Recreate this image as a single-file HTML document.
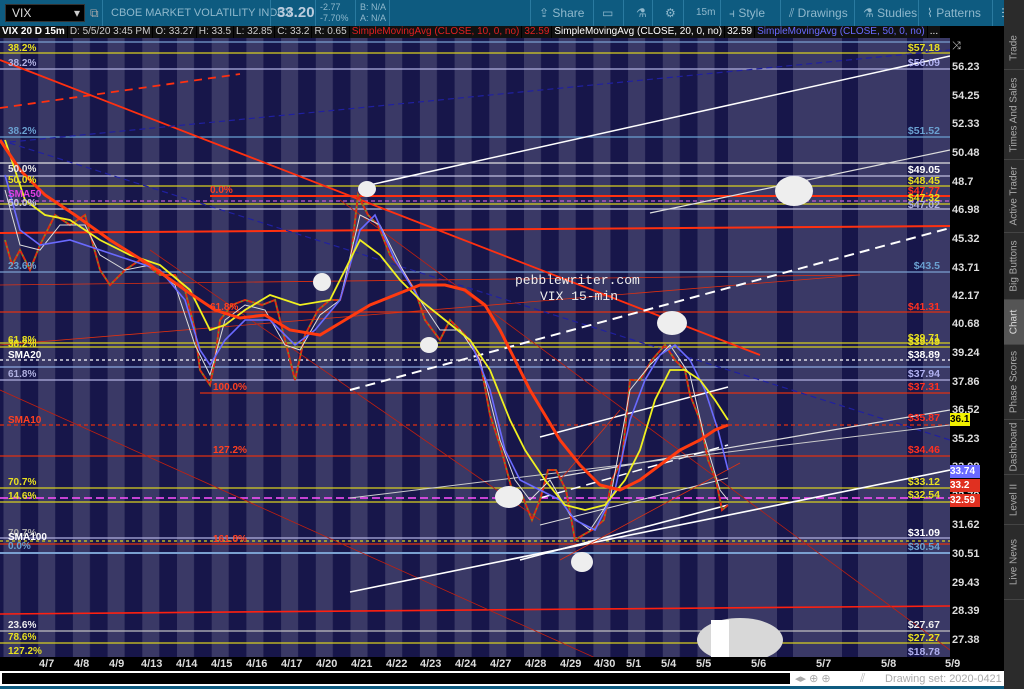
<!DOCTYPE html>
<html><head><meta charset="utf-8"><style>
*{margin:0;padding:0;box-sizing:border-box}
body{width:1024px;height:689px;overflow:hidden;background:#000;font-family:"Liberation Sans",sans-serif;position:relative}
.top{position:absolute;left:0;top:0;width:1024px;height:26px;background:#0e5b80;color:#8fb8cc;font-size:12px}
.top div{position:absolute;top:0;height:26px;line-height:26px;white-space:nowrap}
.sep{border-left:1px solid #2a7aa0}
.info{position:absolute;left:0;top:26px;width:950px;height:12px;background:#000;font-size:10px;line-height:12px;color:#fff;white-space:nowrap;overflow:hidden}
.info span{display:inline-block;background:#111;margin-right:1px;padding:0 2px}
.side{position:absolute;left:1004px;top:0;width:20px;height:689px;background:#2b2b2b}
.tab{position:absolute;left:0;width:20px;border-bottom:1px solid #444;color:#aaa;font-size:10px}
.tab span{position:absolute;left:50%;top:50%;transform:translate(-50%,-50%) rotate(-90deg);white-space:nowrap}
.ax{position:absolute;left:952px;font-size:11px;color:#ddd;font-weight:bold}
.dt{position:absolute;top:658px;font-size:11px;color:#ddd;font-weight:bold}
</style></head><body>
<div class="top">
 <div style="left:5px;top:4px;height:18px;line-height:16px;width:80px;background:#000;color:#ddd;padding-left:6px;border:1px solid #333">VIX<span style="position:absolute;right:4px;top:0;color:#ccc">▾</span></div>
 <div style="left:90px;color:#aaa">⧉</div>
 <div style="left:102px;width:168px;padding-left:8px;font-size:11px" class="sep">CBOE MARKET VOLATILITY INDEX</div>
 <div style="left:270px;width:45px;padding-left:6px;font-size:15px;font-weight:bold;color:#bcd" class="sep">33.20</div>
 <div style="left:315px;width:40px;padding-left:4px;font-size:9px;line-height:11px;padding-top:2px" class="sep">-2.77<br>-7.70%</div>
 <div style="left:355px;width:34px;padding-left:4px;font-size:9px;line-height:11px;padding-top:2px" class="sep">B: N/A<br>A: N/A</div>
 <div style="left:389px;width:1px;background:#2a7aa0"></div>
 <div style="left:530px;padding-left:8px" class="sep">⇪ Share</div>
 <div style="left:593px;padding-left:8px" class="sep">▭</div>
 <div style="left:623px;padding-left:12px" class="sep">⚗</div>
 <div style="left:652px;padding-left:12px" class="sep">⚙</div>
 <div style="left:683px;padding-left:12px;font-size:10px" class="sep">15m</div>
 <div style="left:720px;padding-left:8px" class="sep">⫞ Style</div>
 <div style="left:780px;padding-left:8px" class="sep">⫽ Drawings</div>
 <div style="left:854px;padding-left:8px" class="sep">⚗ Studies</div>
 <div style="left:918px;padding-left:8px" class="sep">⌇ Patterns</div>
 <div style="left:992px;padding-left:8px" class="sep">☰</div>
</div>
<div class="info"><span style="font-weight:bold">VIX 20 D 15m</span><span style="color:#ccc">D: 5/5/20 3:45 PM</span><span style="color:#ccc">O: 33.27</span><span style="color:#ccc">H: 33.5</span><span style="color:#ccc">L: 32.85</span><span style="color:#ccc">C: 33.2</span><span style="color:#ccc">R: 0.65</span><span style="color:#e02020">SimpleMovingAvg (CLOSE, 10, 0, no)</span><span style="color:#e02020">32.59</span><span>SimpleMovingAvg (CLOSE, 20, 0, no)</span><span>32.59</span><span style="color:#6a6aff">SimpleMovingAvg (CLOSE, 50, 0, no)</span><span>...</span></div>
<svg style="position:absolute;left:0;top:38px" width="950" height="619" viewBox="0 38 950 619">
<defs><pattern id="st" x="3.5" y="0" width="34.7" height="700" patternUnits="userSpaceOnUse"><rect width="34.7" height="700" fill="#17164a"/><rect width="17" height="700" fill="#3a3966"/></pattern></defs>
<rect x="0" y="38" width="950" height="619" fill="#3a3966"/>
<rect x="0" y="38" width="728" height="619" fill="url(#st)"/>
<rect x="777" y="38" width="16" height="619" fill="#17164a"/>
<rect x="842" y="38" width="16" height="619" fill="#17164a"/>
<rect x="907" y="38" width="16" height="619" fill="#17164a"/>
<g stroke-width="1.2" fill="none">
<line x1="0" y1="42" x2="950" y2="42" stroke="#7aa0d0"/>
<line x1="0" y1="53" x2="950" y2="53" stroke="#d8d020"/>
<line x1="0" y1="69" x2="950" y2="69" stroke="#b0b0e0"/>
<line x1="0" y1="137" x2="950" y2="137" stroke="#6aa0d0"/>
<line x1="0" y1="163" x2="950" y2="163" stroke="#e0e0e0"/>
<line x1="0" y1="176" x2="950" y2="176" stroke="#c0c0e0"/>
<line x1="0" y1="186" x2="950" y2="186" stroke="#d8d020"/>
<line x1="210" y1="196" x2="950" y2="196" stroke="#ff3010" stroke-width="2"/>
<line x1="0" y1="201" x2="950" y2="201" stroke="#c060d0" stroke-dasharray="4,3"/>
<line x1="0" y1="204" x2="950" y2="204" stroke="#d8d020"/>
<line x1="0" y1="209" x2="950" y2="209" stroke="#c0c0e0"/>
<line x1="0" y1="233" x2="950" y2="226" stroke="#ff3010" stroke-width="2"/>
<line x1="0" y1="272" x2="950" y2="272" stroke="#7aa0d0"/>
<line x1="0" y1="312" x2="950" y2="312" stroke="#e03010"/>
<line x1="0" y1="343" x2="950" y2="343" stroke="#d8d020"/>
<line x1="0" y1="347" x2="950" y2="347" stroke="#d8d020"/>
<line x1="0" y1="360" x2="950" y2="360" stroke="#fff" stroke-dasharray="3,3"/>
<line x1="0" y1="367" x2="950" y2="367" stroke="#8aa8e0"/>
<line x1="0" y1="380" x2="950" y2="380" stroke="#b0b0e0"/>
<line x1="200" y1="393" x2="950" y2="393" stroke="#e03010"/>
<line x1="0" y1="425" x2="950" y2="425" stroke="#e03010" stroke-dasharray="4,3"/>
<line x1="0" y1="456" x2="950" y2="456" stroke="#e03010"/>
<line x1="0" y1="488" x2="950" y2="488" stroke="#d8d020"/>
<line x1="0" y1="498" x2="950" y2="498" stroke="#ff50ff" stroke-dasharray="8,4" stroke-width="1.5"/>
<line x1="0" y1="502" x2="950" y2="502" stroke="#d8d020"/>
<line x1="0" y1="538" x2="950" y2="538" stroke="#b0b0e0"/>
<line x1="0" y1="541" x2="950" y2="541" stroke="#d8d020" stroke-dasharray="3,3"/>
<line x1="0" y1="544" x2="950" y2="544" stroke="#e03010"/>
<line x1="0" y1="553" x2="950" y2="553" stroke="#7aa0d0" stroke-width="2"/>
<line x1="0" y1="614" x2="950" y2="606" stroke="#ff2010" stroke-width="1.6"/>
<line x1="0" y1="631" x2="950" y2="631" stroke="#c0c0c0"/>
<line x1="0" y1="643" x2="950" y2="643" stroke="#d8d020"/>
<line x1="0" y1="60" x2="760" y2="355" stroke="#ff3010" stroke-width="1.8"/>
<line x1="0" y1="108" x2="240" y2="74" stroke="#ff3010" stroke-width="1.8" stroke-dasharray="8,6"/>
<line x1="0" y1="143" x2="950" y2="50" stroke="#2020a0" stroke-dasharray="6,4"/>
<line x1="0" y1="140" x2="950" y2="440" stroke="#2020a0" stroke-dasharray="6,4"/>
<line x1="0" y1="285" x2="860" y2="275" stroke="#e03010" stroke-width="0.8"/>
<line x1="0" y1="345" x2="860" y2="275" stroke="#e03010" stroke-width="0.8"/>
<line x1="0" y1="390" x2="600" y2="660" stroke="#c02010" stroke-width="0.8"/>
<line x1="150" y1="250" x2="540" y2="520" stroke="#c02010" stroke-width="0.8"/>
<line x1="340" y1="200" x2="950" y2="650" stroke="#c02010" stroke-width="0.8"/>
<line x1="365" y1="186" x2="950" y2="56" stroke="#fff" stroke-width="1.5"/>
<line x1="650" y1="213" x2="950" y2="150" stroke="#ddd" stroke-width="1.2"/>
<line x1="350" y1="390" x2="950" y2="228" stroke="#fff" stroke-width="2" stroke-dasharray="10,6"/>
<line x1="540" y1="437" x2="728" y2="387" stroke="#fff" stroke-width="1.5"/>
<line x1="540" y1="480" x2="950" y2="410" stroke="#ddd" stroke-width="1.2"/>
<line x1="540" y1="498" x2="728" y2="445" stroke="#fff" stroke-width="1.5" stroke-dasharray="10,6"/>
<line x1="350" y1="498" x2="950" y2="425" stroke="#ccc" stroke-width="1"/>
<line x1="540" y1="525" x2="728" y2="478" stroke="#ddd" stroke-width="1"/>
<line x1="350" y1="592" x2="950" y2="470" stroke="#fff" stroke-width="1.6"/>
<line x1="520" y1="560" x2="728" y2="505" stroke="#fff" stroke-width="1.6"/>
<line x1="560" y1="560" x2="740" y2="463" stroke="#e03010" stroke-width="0.8"/>
<line x1="560" y1="480" x2="620" y2="410" stroke="#e03010" stroke-width="0.8"/>
</g>
<polyline fill="none" stroke="#e02a10" stroke-width="2" points="5,240 12,265 20,250 30,270 40,245 55,215 70,225 85,215 100,270 110,285 125,270 140,260 160,275 175,275 185,290 195,330 200,370 210,385 215,360 220,320 232,305 245,300 262,305 275,300 285,340 295,380 305,335 318,310 330,300 340,300 350,265 358,195 368,215 378,225 390,255 402,270 415,290 425,320 440,340 450,320 465,335 480,360 490,415 500,445 512,490 522,495 532,520 540,500 548,470 556,470 566,490 575,540 583,535 592,530 604,520 612,480 622,460 630,380 640,380 652,360 665,345 675,360 685,370 690,395 700,420 708,460 716,480 722,510 728,505"/>
<polyline fill="none" stroke="#3ac03a" stroke-width="1" stroke-dasharray="2,4" points="5,240 12,265 20,250 30,270 40,245 55,215 70,225 85,215 100,270 110,285 125,270 140,260 160,275 175,275 185,290 195,330 200,370 210,385 215,360 220,320 232,305 245,300 262,305 275,300 285,340 295,380 305,335 318,310 330,300 340,300 350,265 358,195 368,215 378,225 390,255 402,270 415,290 425,320 440,340 450,320 465,335 480,360 490,415 500,445 512,490 522,495 532,520 540,500 548,470 556,470 566,490 575,540 583,535 592,530 604,520 612,480 622,460 630,380 640,380 652,360 665,345 675,360 685,370 690,395 700,420 708,460 716,480 722,510 728,505"/>
<polyline fill="none" stroke="#ddd" stroke-width="1" points="5,190 20,245 40,250 60,225 85,225 100,255 125,270 150,265 175,285 195,345 210,375 225,320 245,305 265,310 285,345 300,350 320,315 340,300 360,215 380,225 400,265 420,300 440,330 460,330 480,360 500,440 515,480 530,500 550,480 570,515 590,530 610,500 630,390 650,365 670,345 690,375 705,440 720,490 728,500"/>
<polyline fill="none" stroke="#6a6aff" stroke-width="1.6" points="5,175 20,230 40,245 70,240 100,250 130,260 160,270 185,300 200,350 210,365 225,340 245,320 270,320 295,345 315,330 340,300 360,230 375,215 395,260 420,300 445,320 470,340 490,390 505,450 520,480 540,490 560,500 575,520 595,530 615,490 630,420 645,380 660,355 675,345 690,360 705,390 718,430 728,470"/>
<polyline fill="none" stroke="#f0f020" stroke-width="1.8" points="5,140 25,200 45,215 70,220 100,240 130,255 160,265 190,290 210,330 225,325 245,310 270,295 300,305 330,300 360,240 380,255 400,280 420,300 445,320 470,340 490,370 510,420 525,450 545,480 565,505 585,510 605,505 625,480 640,450 655,400 670,370 685,370 700,380 715,400 728,420"/>
<polyline fill="none" stroke="#ff3a10" stroke-width="3" points="0,140 20,170 45,195 75,215 110,240 150,265 185,290 215,310 240,318 265,315 290,330 320,335 345,320 370,305 395,295 420,285 445,285 465,290 485,305 500,330 515,360 530,390 545,415 560,440 580,465 600,485 620,490 640,480 660,465 680,450 700,440 715,430 728,425"/>
<g fill="#eee">
<ellipse cx="367" cy="189" rx="9" ry="8"/><ellipse cx="322" cy="282" rx="9" ry="9"/><ellipse cx="429" cy="345" rx="9" ry="8"/><ellipse cx="672" cy="323" rx="15" ry="12"/><ellipse cx="509" cy="497" rx="14" ry="11"/><ellipse cx="582" cy="562" rx="11" ry="10"/><ellipse cx="794" cy="191" rx="19" ry="15"/><ellipse cx="740" cy="640" rx="43" ry="22" fill="#d8d8d8"/><rect x="711" y="620" width="18" height="37" fill="#fff"/>
</g>
<text x="515" y="284" fill="#eee" font-family="Liberation Mono" font-size="13">pebblewriter.com</text>
<text x="540" y="300" fill="#eee" font-family="Liberation Mono" font-size="13">VIX 15-min</text>
<g font-size="10" font-weight="bold">
<text x="8" y="51" fill="#e8e020">38.2%</text><text x="8" y="66" fill="#b0b0e0">38.2%</text><text x="8" y="134" fill="#6aa0d0">38.2%</text>
<text x="8" y="172" fill="#e8e8e8">50.0%</text><text x="8" y="183" fill="#e8e020">50.0%</text><text x="8" y="197" fill="#e040e0">SMA50</text><text x="8" y="206" fill="#c0c0e0">50.0%</text>
<text x="210" y="193" fill="#ff4020">0.0%</text><text x="8" y="269" fill="#6aa0d0">23.6%</text><text x="210" y="310" fill="#ff4020">61.8%</text>
<text x="8" y="343" fill="#e8e020">61.8%</text><text x="8" y="347" fill="#e8e020">38.2%</text><text x="8" y="358" fill="#fff">SMA20</text><text x="8" y="377" fill="#b0b0e0">61.8%</text>
<text x="213" y="390" fill="#ff4020">100.0%</text><text x="8" y="423" fill="#ff4020">SMA10</text><text x="213" y="453" fill="#ff4020">127.2%</text>
<text x="8" y="485" fill="#e8e020">70.7%</text><text x="8" y="499" fill="#e8e020">14.6%</text><text x="8" y="536" fill="#aaa">70.7%</text><text x="8" y="540" fill="#fff">SMA100</text><text x="8" y="549" fill="#6aa0d0">0.0%</text>
<text x="213" y="542" fill="#ff4020">161.8%</text>
<text x="8" y="628" fill="#eee">23.6%</text><text x="8" y="640" fill="#e8e020">78.6%</text><text x="8" y="654" fill="#e8e020">127.2%</text>
</g>
<g font-size="10.5" font-weight="bold" text-anchor="end">
<text x="940" y="51" fill="#e8e020">$57.18</text><text x="940" y="66" fill="#b0b0f0">$56.09</text><text x="940" y="134" fill="#6aa0d0">$51.52</text>
<text x="940" y="173" fill="#fff">$49.05</text><text x="940" y="184" fill="#e8e020">$48.45</text><text x="940" y="194" fill="#ff3020">$47.77</text><text x="940" y="201" fill="#e8e020">$47.32</text><text x="940" y="208" fill="#b0b0e0">$47.02</text>
<text x="940" y="269" fill="#6aa0d0">$43.5</text><text x="940" y="310" fill="#ff3020">$41.31</text><text x="940" y="341" fill="#e8e020">$39.71</text><text x="940" y="345" fill="#e8e020">$39.49</text>
<text x="940" y="358" fill="#fff">$38.89</text><text x="940" y="377" fill="#b0b0f0">$37.94</text><text x="940" y="390" fill="#ff3020">$37.31</text><text x="940" y="421" fill="#ff3020">$35.87</text>
<text x="940" y="453" fill="#ff3020">$34.46</text><text x="940" y="485" fill="#e8e020">$33.12</text><text x="940" y="498" fill="#e8e020">$32.54</text>
<text x="940" y="536" fill="#fff">$31.09</text><text x="940" y="550" fill="#6aa0d0">$30.54</text>
<text x="940" y="628" fill="#eee">$27.67</text><text x="940" y="641" fill="#e8e020">$27.27</text><text x="940" y="655" fill="#b0b0f0">$18.78</text>
</g>
</svg>
<div class="ax" style="top:61px">56.23</div><div class="ax" style="top:90px">54.25</div><div class="ax" style="top:118px">52.33</div><div class="ax" style="top:147px">50.48</div><div class="ax" style="top:176px">48.7</div><div class="ax" style="top:204px">46.98</div><div class="ax" style="top:233px">45.32</div><div class="ax" style="top:262px">43.71</div><div class="ax" style="top:290px">42.17</div><div class="ax" style="top:318px">40.68</div><div class="ax" style="top:347px">39.24</div><div class="ax" style="top:376px">37.86</div><div class="ax" style="top:404px">36.52</div><div class="ax" style="top:433px">35.23</div><div class="ax" style="top:461px">33.98</div><div class="ax" style="top:490px">32.79</div><div class="ax" style="top:519px">31.62</div><div class="ax" style="top:548px">30.51</div><div class="ax" style="top:577px">29.43</div><div class="ax" style="top:605px">28.39</div><div class="ax" style="top:634px">27.38</div>
<div style="position:absolute;left:950px;top:413px;width:20px;height:13px;background:#f0f000;color:#000;font-size:10px;font-weight:bold;line-height:13px">36.1</div>
<div style="position:absolute;left:950px;top:465px;width:30px;height:13px;background:#6a6aff;color:#fff;font-size:10px;font-weight:bold;line-height:13px">33.74</div>
<div style="position:absolute;left:950px;top:479px;width:30px;height:13px;background:#e03020;color:#fff;font-size:10px;font-weight:bold;line-height:13px">33.2</div>
<div style="position:absolute;left:950px;top:494px;width:30px;height:13px;background:#e03020;color:#fff;font-size:10px;font-weight:bold;line-height:13px">32.59</div>
<div style="position:absolute;left:952px;top:40px;color:#ccc;font-size:11px">⤨</div>
<div class="dt" style="left:39px">4/7</div><div class="dt" style="left:74px">4/8</div><div class="dt" style="left:109px">4/9</div><div class="dt" style="left:141px">4/13</div><div class="dt" style="left:176px">4/14</div><div class="dt" style="left:211px">4/15</div><div class="dt" style="left:246px">4/16</div><div class="dt" style="left:281px">4/17</div><div class="dt" style="left:316px">4/20</div><div class="dt" style="left:351px">4/21</div><div class="dt" style="left:386px">4/22</div><div class="dt" style="left:420px">4/23</div><div class="dt" style="left:455px">4/24</div><div class="dt" style="left:490px">4/27</div><div class="dt" style="left:525px">4/28</div><div class="dt" style="left:560px">4/29</div><div class="dt" style="left:594px">4/30</div><div class="dt" style="left:626px">5/1</div><div class="dt" style="left:661px">5/4</div><div class="dt" style="left:696px">5/5</div><div class="dt" style="left:751px">5/6</div><div class="dt" style="left:816px">5/7</div><div class="dt" style="left:881px">5/8</div><div class="dt" style="left:945px">5/9</div>
<div style="position:absolute;left:0;top:671px;width:1004px;height:15px;background:#fff"></div>
<div style="position:absolute;left:2px;top:673px;width:788px;height:11px;background:#000"></div>
<div style="position:absolute;left:795px;top:672px;font-size:11px;color:#aaa">◂▸ ⊕ ⊕</div>
<div style="position:absolute;left:860px;top:671px;font-size:12px;color:#bbb">⫽</div>
<div style="position:absolute;left:885px;top:673px;font-size:11px;color:#aaa">Drawing set: 2020-0421</div>
<div style="position:absolute;left:0;top:686px;width:1024px;height:3px;background:#0e5b80"></div>
<div class="side">
 <div class="tab" style="top:26px;height:44px"><span>Trade</span></div>
 <div class="tab" style="top:70px;height:90px"><span>Times And Sales</span></div>
 <div class="tab" style="top:160px;height:73px"><span>Active Trader</span></div>
 <div class="tab" style="top:233px;height:67px"><span>Big Buttons</span></div>
 <div class="tab" style="top:300px;height:45px;background:#555;color:#ddd"><span>Chart</span></div>
 <div class="tab" style="top:345px;height:75px"><span>Phase Scores</span></div>
 <div class="tab" style="top:420px;height:55px"><span>Dashboard</span></div>
 <div class="tab" style="top:475px;height:50px"><span>Level II</span></div>
 <div class="tab" style="top:525px;height:75px"><span>Live News</span></div>
</div>
</body></html>
